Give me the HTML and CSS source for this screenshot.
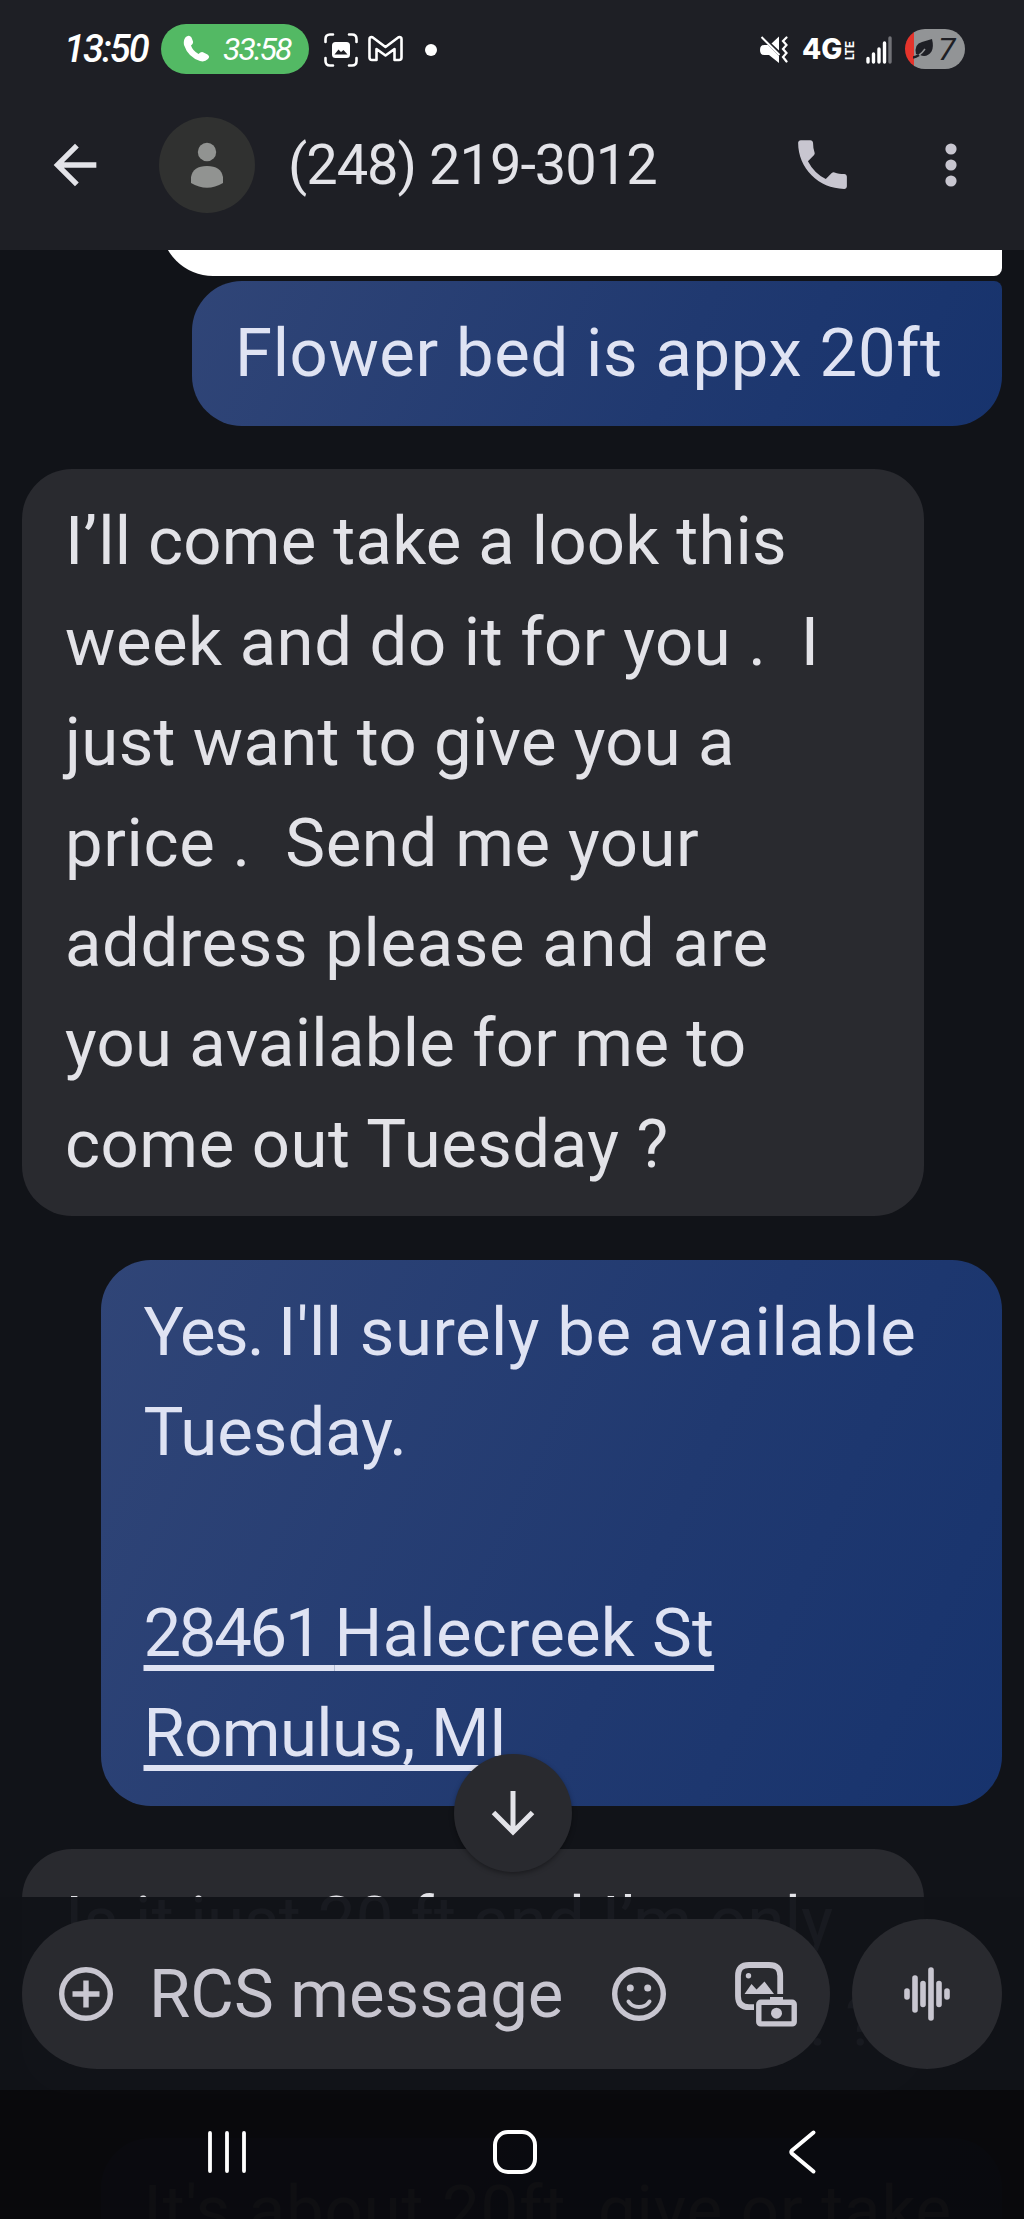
FILE: index.html
```html
<!DOCTYPE html>
<html lang="en">
<head>
<meta charset="utf-8">
<title>Messages</title>
<link rel="stylesheet" href="styles.css">
</head>
<body>
<div class="phone">
  <header class="top">
    <div class="status">
      <span class="clock">13:50</span>
      <span class="call-pill">
        <svg width="27" height="27" viewBox="0 0 27 27"><path d="M3.600 1.500Q6.500-.6 8.500 2.500L10 6.500Q10.500 9 8 10.500Q9.500 15.500 15.500 19Q18 16.500 20 17.300L24.500 19.500Q27.500 21.500 25 24Q21.500 27.500 17 26Q5 22 1 10Q0 4 3.600 1.500Z" fill="#fff"/></svg>
        <span>33:58</span>
      </span>
      <svg class="i-capture" width="34" height="34" viewBox="0 0 34 34"><path d="M1.500 9V6Q1.500 1.500 6 1.500H9M25 1.500H28Q32.500 1.500 32.500 6V9M32.500 25V28Q32.500 32.500 28 32.500H25M9 32.500H6Q1.500 32.500 1.500 28V25" fill="none" stroke="#fff" stroke-width="2.600" stroke-linecap="round"/><rect x="8" y="9" width="18" height="16" rx="3.500" fill="#fff"/><path d="M10.500 21.500L14.500 16.500L17 19L19.500 17L23.500 21.500Z" fill="#1e1f25"/></svg>
      <svg class="i-mail" width="35" height="27" viewBox="0 0 35 27"><path d="M1.500 4Q1.500 1.500 4.500 2.300L17.500 12L30.500 2.300Q33.500 1.500 33.500 4V22.500Q33.500 25 31 25H26.500V14L17.500 20.500L8.500 14V25H4Q1.500 25 1.500 22.500Z" fill="none" stroke="#fff" stroke-width="2.600" stroke-linejoin="round"/></svg>
      <i class="more-dot"></i>
      <svg class="i-mute" width="28" height="28" viewBox="0 0 28 28"><path d="M4 9H8L19 20V27L9 19H4Q0 19 0 14Q0 9 4 9Z" fill="#fff"/><path d="M11.500 7.500L19 .5V14.500Z" fill="#fff"/><path d="M1.500 1L19.500 19" stroke="#fff" stroke-width="2"/><path d="M26.500 1.500L23 5L26.500 9L23 13L26.500 17L23 21L26.500 25.500" fill="none" stroke="#fff" stroke-width="2.200" stroke-linecap="round"/></svg>
      <span class="net">4G</span><span class="lte">LTE</span>
      <svg class="i-signal" width="27" height="28" viewBox="0 0 27 28" stroke-width="3.400" stroke-linecap="round"><path d="M2 22.500V26M7.500 18V26M13 13V26M18.500 7V26" stroke="#fff"/><path d="M24 2V26" stroke="#717277"/></svg>
      <span class="battery">
        <svg width="21" height="22" viewBox="0 0 21 22"><path d="M3 16Q1 6 9 4Q14 2.500 19 1Q21 9 18.500 13.500Q14 20 7 17Z" fill="#1e1f25"/><path d="M1 19Q7 18 12 11" stroke="#929496" stroke-width="1.500" fill="none"/><path d="M0 19.500Q3 19 6 17" stroke="#1e1f25" stroke-width="2.500" fill="none"/></svg>
        <span>7</span>
      </span>
    </div>
    <div class="appbar">
      <svg class="i-back" width="64" height="64" viewBox="0 0 24 24"><path d="M20 11H7.830l5.590-5.590L12 4l-8 8 8 8 1.410-1.410L7.830 13H20v-2z" fill="#e3e3e8"/></svg>
      <svg class="avatar" width="96" height="96" viewBox="0 0 96 96"><circle cx="48" cy="48" r="48" fill="#303130"/><circle cx="48" cy="35" r="9.200" fill="#919391"/><path d="M32 60Q34 49 48 49Q62 49 64 60V66Q48 75.500 32 66Z" fill="#919391"/></svg>
      <h1 class="title">(248) 219-3012</h1>
      <svg class="i-phone" width="65" height="65" viewBox="0 0 24 24"><path d="M20 15.500c-1.250 0-2.450-.2-3.570-.57a.84.84 0 0 0-.31-.05c-.26.01-.51.110-.71.290l-2.200 2.200a15.100 15.100 0 0 1-6.590-6.590l2.200-2.210c.28-.26.360-.65.250-1A11.400 11.400 0 0 1 8.500 4c0-.55-.45-1-1-1H4c-.55 0-1 .45-1 1 0 9.390 7.610 17 17 17 .55 0 1-.45 1-1v-3.500c0-.55-.45-1-1-1z" fill="#c8c6d0"/></svg>
      <svg class="i-dots" width="12" height="44" viewBox="0 0 12 44" fill="#c8c6d0"><circle cx="6" cy="6" r="5.600"/><circle cx="6" cy="22" r="5.600"/><circle cx="6" cy="38" r="5.600"/></svg>
    </div>
  </header>

  <main class="thread">
    <div class="attachment"></div>
    <div class="bubble out first"><p class="t62">Flower bed is appx 20ft</p></div>
    <div class="bubble in">
      <p class="t23">I’ll come take a look this</p>
      <p class="t52">week and do it for you .  I</p>
      <p class="t36">just want to give you a</p>
      <p class="t62">price .  Send me your</p>
      <p class="t62">address please and are</p>
      <p class="t36">you available for me to</p>
      <p class="t52">come out Tuesday ?</p>
    </div>
    <div class="bubble out wide">
      <p class="t52"><span class="tight">Yes. </span>I'll surely be available</p>
      <p>Tuesday.</p>
      <p>&nbsp;</p>
      <p><a class="addr street"><span class="digits">28461 </span>Halecreek St</a></p>
      <p><a class="addr">Romulus, MI</a></p>
    </div>
    <div class="bubble in">
      <p class="t23">Is it just 20 ft and I’m only</p>
      <p class="tail">. ?</p>
    </div>
    <div class="bubble out wide"><p class="t94">It's about 20ft, give or take</p></div>
  </main>

  <button class="jump" aria-label="Scroll to latest"><svg width="44" height="46" viewBox="0 0 44 46"><path d="M22 1V42M2.500 22.500L22 42L41.500 22.500" fill="none" stroke="#e3e3e8" stroke-width="5"/></svg></button>

  <footer class="bottom">
    <div class="composer">
      <div class="field">
        <svg class="i-plus" width="54" height="54" viewBox="0 0 54 54" fill="none" stroke="#c8c6d0" stroke-width="5.400"><circle cx="27" cy="27" r="24.300"/><path d="M27 13.500V40.500M13.500 27H40.500"/></svg>
        <span class="placeholder">RCS message</span>
        <svg class="i-smile" width="54" height="54" viewBox="0 0 54 54"><circle cx="27" cy="27" r="24.300" fill="none" stroke="#c8c6d0" stroke-width="5.400"/><circle cx="18.300" cy="21" r="3.500" fill="#c8c6d0"/><circle cx="35.700" cy="21" r="3.500" fill="#c8c6d0"/><path d="M16.500 34.500Q20 40 27 40T37.500 34.500" fill="none" stroke="#c8c6d0" stroke-width="4" stroke-linecap="round"/></svg>
        <svg class="i-gallery" width="62" height="65" viewBox="0 0 62 65"><path d="M45.200 32V14Q45.200 3 34 3H14Q3 3 3 14V34Q3 45.200 14 45.200H19" fill="none" stroke="#c8c6d0" stroke-width="5.800"/><circle cx="13.500" cy="13.700" r="2.700" fill="#c8c6d0"/><path d="M9.500 32L16.500 22L21.500 27.500L29.500 19.500L39 32Z" fill="#c8c6d0"/><path d="M35 35H48V40H35Z" fill="#c8c6d0"/><rect x="23.800" y="40.300" width="35.400" height="21.600" rx="2" fill="none" stroke="#c8c6d0" stroke-width="5.400"/><circle cx="41.500" cy="51.200" r="5.500" fill="#c8c6d0"/></svg>
      </div>
      <div class="voice"><svg width="48" height="56" viewBox="0 0 48 56" stroke="#c8c6d0" stroke-width="5.600" stroke-linecap="round"><path d="M4 25V31M12 12V44M20 17.500V38.500M28 4V52M36 17.500V38.500M44 25V31"/></svg></div>
    </div>
    <nav class="nav">
      <svg width="40" height="46" viewBox="0 0 40 46"><path d="M3 4V42M20 4V42M37 4V42" stroke="#fff" stroke-width="3.800" stroke-linecap="round"/></svg>
      <svg class="i-home" width="46" height="46" viewBox="0 0 46 46"><rect x="3" y="3" width="40" height="40" rx="13" fill="none" stroke="#fff" stroke-width="4"/></svg>
      <svg width="30" height="46" viewBox="0 0 30 46"><path d="M26.500 3.500L5 21.500Q3.500 23 5 24.500L26.500 42.500" fill="none" stroke="#fff" stroke-width="4" stroke-linecap="round"/></svg>
    </nav>
  </footer>
</div>
</body>
</html>
```
FILE: styles.css
```css
* { box-sizing: border-box; }
body { margin: 0; background: #111318; font-family: Roboto, "Liberation Sans", sans-serif; }
svg { display: block; flex: none; }
p, h1 { margin: 0; }

.phone { position: relative; width: 1024px; height: 2219px; overflow: hidden; display: flex; flex-direction: column; background: #111318; }

.top { flex: none; height: 250px; background: #1e1f25; }
.status { display: flex; align-items: center; height: 97px; padding-left: 64px; color: #fff; }
.clock { width: 97px; font-size: 38px; font-weight: 500; font-style: italic; letter-spacing: -2px; white-space: nowrap; }
.call-pill { display: flex; align-items: center; gap: 13px; width: 148px; height: 50px; padding-left: 22px; border-radius: 25px; background: #53b964; font-size: 32px; font-style: italic; letter-spacing: -2px; }
.i-capture { margin: 2px 0 0 15px; }
.i-mail { margin-left: 10px; }
.more-dot { width: 12px; height: 12px; margin: 2px 0 0 22px; border-radius: 50%; background: #fff; }
.i-mute { margin: 2px 0 0 323px; }
.net { width: 43px; margin-left: 14px; font: 800 28px/28px Inter, sans-serif; }
.lte { width: 11px; height: 22px; font: 700 12px/11px Roboto, sans-serif; letter-spacing: -.3px; writing-mode: vertical-rl; transform: rotate(180deg); }
.i-signal { margin: 2px 0 0 10px; }
.battery { display: flex; align-items: center; gap: 4px; width: 60px; height: 40px; margin-left: 12px; padding-left: 8px; border-radius: 20px; background: linear-gradient(90deg, #e5342c 9px, #929496 9px); color: #1e1f25; font-size: 32px; font-style: italic; }

.appbar { display: flex; align-items: center; height: 135px; padding-left: 43px; }
.avatar { margin-left: 52px; }
.title { width: 502px; padding-left: 33px; color: #e3e3e8; font-size: 56px; font-weight: 400; letter-spacing: -1px; white-space: nowrap; }
.i-phone { margin-left: 33px; }
.i-dots { margin-left: 90px; }

.thread { display: flex; flex: none; flex-direction: column; align-items: flex-start; gap: 43.300px; }
.attachment { align-self: flex-end; width: 844px; height: 25.500px; margin: 0 22px -37.600px 0; position: relative; overflow: hidden; }
.attachment::before { content: ""; position: absolute; right: 0; bottom: 0; width: 841px; height: 200px; border-radius: 52px 8px 8px 52px; background: #fff; }
.bubble { padding: 22.200px 43px; border-radius: 50px; font-size: 67px; line-height: 100.400px; }
.bubble.in { width: 902px; margin-left: 22px; background: #292a2f; color: #e3e3e8; }
.bubble.out { align-self: flex-end; width: 810px; margin-right: 22px; background: linear-gradient(115deg, #304577, #203970 60%, #17336d); color: #dfe3f3; }
.bubble.out.wide { width: 901.500px; }
.bubble.first { border-top-right-radius: 8px; }
.bubble p { height: 100.400px; white-space: pre; }
.t23 { letter-spacing: .23px; }
.t36 { letter-spacing: .34px; }
.t52 { letter-spacing: .53px; }
.t62 { letter-spacing: .62px; }
.t94 { letter-spacing: .94px; }
.tight { letter-spacing: -1.600px; }
.addr { letter-spacing: -.6px; text-decoration: underline; text-decoration-thickness: 5.700px; text-underline-offset: 9px; text-decoration-skip-ink: none; }
.addr.street { letter-spacing: .25px; }
.digits { letter-spacing: -2.300px; }
.tail { padding-left: 744px; letter-spacing: 1px; }

/* floating button above the message list */
.jump { position: absolute; left: 454px; top: 1754px; display: flex; align-items: center; justify-content: center; width: 118px; height: 118px; padding: 0; border: 0; border-radius: 50%; background: #292a2f; box-shadow: 0 2px 5px rgba(0, 0, 0, .35); }

/* translucent composer and navigation laid over the list */
.bottom { position: absolute; left: 0; right: 0; bottom: 0; }
.composer { display: flex; justify-content: space-between; height: 193px; padding: 22px 22px 21px; background: rgba(17, 19, 24, .965); }
.field { display: flex; align-items: center; width: 808px; height: 150px; padding-left: 37px; border-radius: 75px; background: #292a2f; }
.placeholder { width: 499px; padding-left: 36px; color: #c8c6d0; font-size: 67px; white-space: nowrap; }
.i-gallery { margin-left: 69px; }
.voice { display: flex; align-items: center; justify-content: center; width: 150px; height: 150px; border-radius: 50%; background: #292a2f; }
.nav { display: flex; align-items: center; height: 129px; padding: 0 207px 6px; justify-content: space-between; background: rgba(9, 9, 12, .975); }
.i-home { margin-right: 4px; }
```
